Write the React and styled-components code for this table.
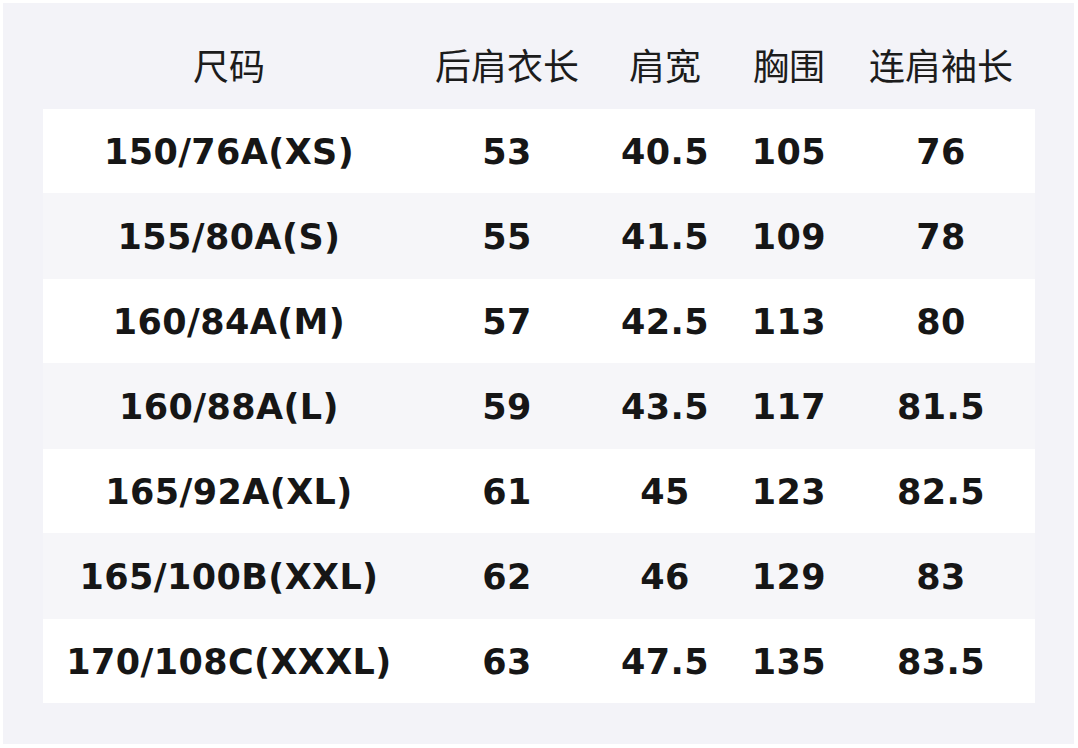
import React from "react";
import styled, { createGlobalStyle } from "styled-components";

const GlobalStyle = createGlobalStyle`
  html, body {
    margin: 0;
    padding: 0;
    background: #ffffff;
  }
`;

const Panel = styled.div`
  margin: 3px 4px 0 3px;
  height: 741px;
  background: #f3f3f8;
  padding: 0 39px 0 40px;
  box-sizing: border-box;
`;

const Grid = styled.div`
  display: grid;
  grid-template-columns: 372px 184px 132px 116px 188px;
`;

const HeaderRow = styled(Grid)`
  height: 106px;
  padding-top: 16px;
  box-sizing: border-box;
  align-items: center;
`;

const HeadCell = styled.div`
  text-align: center;
  font-family: "Noto Sans CJK SC", "Noto Sans", sans-serif;
  font-size: 36px;
  font-weight: 400;
  color: #1c1c1c;
  line-height: 1;
`;

const Row = styled(Grid)`
  height: ${(p) => p.$h}px;
  padding-top: 2px;
  box-sizing: border-box;
  align-items: center;
  background: ${(p) => (p.$striped ? "#f6f6f9" : "#ffffff")};
`;

const Cell = styled.div`
  text-align: center;
  font-family: "DejaVu Sans", "Liberation Sans", sans-serif;
  font-size: 35px;
  font-weight: 700;
  color: #161616;
  letter-spacing: 0.4px;
  line-height: 1;
`;

const headers = ["尺码", "后肩衣长", "肩宽", "胸围", "连肩袖长"];

const rows = [
  ["150/76A(XS)", "53", "40.5", "105", "76"],
  ["155/80A(S)", "55", "41.5", "109", "78"],
  ["160/84A(M)", "57", "42.5", "113", "80"],
  ["160/88A(L)", "59", "43.5", "117", "81.5"],
  ["165/92A(XL)", "61", "45", "123", "82.5"],
  ["165/100B(XXL)", "62", "46", "129", "83"],
  ["170/108C(XXXL)", "63", "47.5", "135", "83.5"],
];

const heights = [84, 86, 84, 86, 84, 86, 84];

export default function App() {
  return (
    <>
      <GlobalStyle />
      <Panel>
        <HeaderRow>
          {headers.map((h) => (
            <HeadCell key={h}>{h}</HeadCell>
          ))}
        </HeaderRow>
        {rows.map((r, i) => (
          <Row key={r[0]} $striped={i % 2 === 1} $h={heights[i]}>
            {r.map((v, j) => (
              <Cell key={j}>{v}</Cell>
            ))}
          </Row>
        ))}
      </Panel>
    </>
  );
}
